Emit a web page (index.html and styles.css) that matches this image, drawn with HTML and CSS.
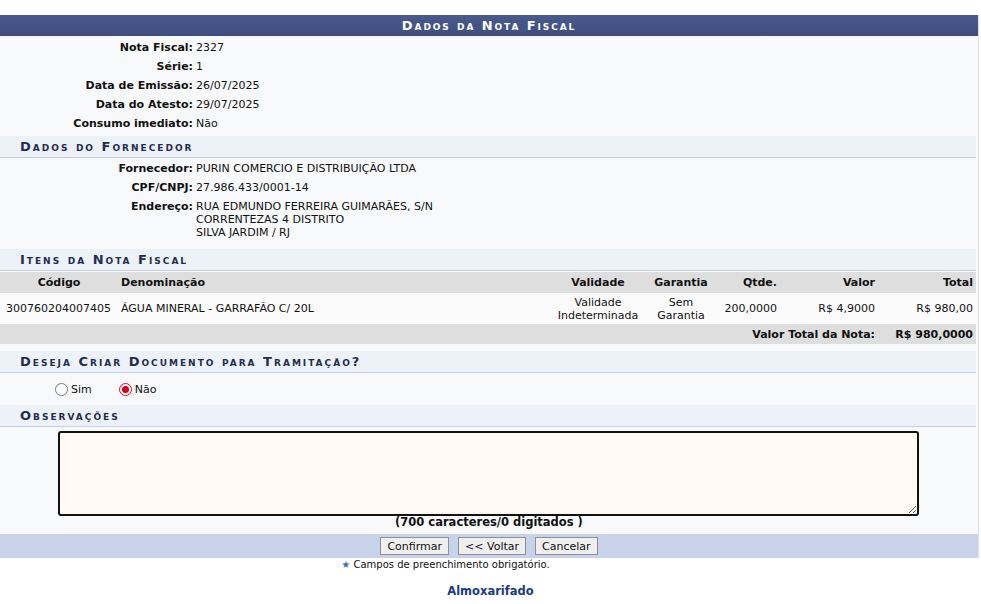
FILE: index.html
```html
<!DOCTYPE html>
<html lang="pt-BR">
<head>
<meta charset="utf-8">
<title>Dados da Nota Fiscal</title>
<link rel="stylesheet" href="styles.css">
</head>
<body>
<div class="page">
  <div class="form">
    <div class="caption">Dados da Nota Fiscal</div>

    <div class="info info-first">
      <div class="row"><span class="lbl">Nota Fiscal:</span><span class="val">2327</span></div>
      <div class="row"><span class="lbl">Série:</span><span class="val">1</span></div>
      <div class="row"><span class="lbl">Data de Emissão:</span><span class="val">26/07/2025</span></div>
      <div class="row"><span class="lbl">Data do Atesto:</span><span class="val">29/07/2025</span></div>
      <div class="row"><span class="lbl">Consumo imediato:</span><span class="val">Não</span></div>
    </div>

    <div class="subcaption">Dados do Fornecedor</div>
    <div class="info info-forn">
      <div class="row"><span class="lbl">Fornecedor:</span><span class="val">PURIN COMERCIO E DISTRIBUIÇÃO LTDA</span></div>
      <div class="row"><span class="lbl">CPF/CNPJ:</span><span class="val">27.986.433/0001-14</span></div>
      <div class="row"><span class="lbl">Endereço:</span><span class="val">RUA EDMUNDO FERREIRA GUIMARÃES, S/N<br>CORRENTEZAS 4 DISTRITO<br>SILVA JARDIM / RJ</span></div>
    </div>

    <div class="subcaption">Itens da Nota Fiscal</div>
    <table class="itens">
      <colgroup>
        <col class="c-cod"><col class="c-den"><col class="c-val"><col class="c-gar"><col class="c-qt"><col class="c-vl"><col class="c-tot">
      </colgroup>
      <thead>
        <tr>
          <th class="center">Código</th>
          <th class="left">Denominação</th>
          <th class="center">Validade</th>
          <th class="center">Garantia</th>
          <th class="right">Qtde.</th>
          <th class="right">Valor</th>
          <th class="right">Total</th>
        </tr>
      </thead>
      <tbody>
        <tr class="item">
          <td class="left">300760204007405</td>
          <td class="left">ÁGUA MINERAL - GARRAFÃO C/ 20L</td>
          <td class="center">Validade<br>Indeterminada</td>
          <td class="center">Sem<br>Garantia</td>
          <td class="right">200,0000</td>
          <td class="right">R$ 4,9000</td>
          <td class="right">R$ 980,00</td>
        </tr>
      </tbody>
      <tfoot>
        <tr>
          <td colspan="6" class="right">Valor Total da Nota:</td>
          <td class="right">R$ 980,0000</td>
        </tr>
      </tfoot>
    </table>

    <div class="subcaption">Deseja Criar Documento para Tramitação?</div>
    <div class="radios">
      <label class="radio"><span class="rb"></span>Sim</label>
      <label class="radio"><span class="rb rb-on"></span>Não</label>
    </div>

    <div class="subcaption">Observações</div>
    <div class="obs">
      <textarea class="obs-text"></textarea>
      <div class="counter">(700 caracteres/0 digitados )</div>
    </div>

    <div class="buttons">
      <button class="btn" type="button">Confirmar</button>
      <button class="btn" type="button">&lt;&lt; Voltar</button>
      <button class="btn" type="button">Cancelar</button>
    </div>
  </div>

  <div class="required"><span class="star">★</span> Campos de preenchimento obrigatório.</div>
  <div class="module">Almoxarifado</div>
</div>
</body>
</html>
```

FILE: styles.css
```css
html, body {
  margin: 0;
  padding: 0;
  background: #ffffff;
}

body {
  font-family: "DejaVu Sans", Verdana, sans-serif;
  font-size: 11px;
  color: #111;
}

.page {
  padding-top: 15px;
}

.form {
  width: 978px;
  background: #f8f9fb;
  border-right: 1px solid #dde1e8;
}

.caption {
  height: 21px;
  line-height: 22px;
  background: linear-gradient(#4b5a8c, #3f4e7f);
  color: #ffffff;
  font-weight: bold;
  font-variant: small-caps;
  font-size: 13px;
  letter-spacing: 1.9px;
  text-align: center;
}

.info-first {
  padding: 2px 0 3px;
}

.info-forn {
  padding: 1px 0 7px;
}

.row {
  display: flex;
  padding: 3px 0;
  line-height: 13px;
}

.lbl {
  width: 193px;
  text-align: right;
  font-weight: bold;
  flex: none;
}

.val {
  padding-left: 3px;
}

.subcaption {
  height: 21px;
  line-height: 22px;
  margin-right: 2px;
  background: #edf1f8;
  border-bottom: 1px solid #c4cee2;
  color: #1f2d52;
  font-weight: bold;
  font-variant: small-caps;
  font-size: 13px;
  letter-spacing: 2px;
  padding-left: 20px;
}

.itens {
  width: 976px;
  table-layout: fixed;
  border-collapse: collapse;
  margin-top: 1px;
  margin-bottom: 7px;
}

.c-cod { width: 118px; }
.c-den { width: 433px; }
.c-val { width: 94px; }
.c-gar { width: 72px; }
.c-qt { width: 63px; }
.c-vl { width: 98px; }
.c-tot { width: 98px; }

.itens th,
.itens td {
  padding: 0 3px;
  line-height: 13px;
  white-space: nowrap;
}

.itens thead tr {
  background: #dedede;
  height: 21px;
}

.itens th {
  font-weight: bold;
}

.itens .item {
  background: #fbfbfb;
  height: 31px;
}

.itens tfoot tr {
  background: #dedede;
  height: 20px;
}

.itens tfoot td {
  font-weight: bold;
}

.center { text-align: center; }
.left { text-align: left; }
.right { text-align: right; }

.itens tbody td.left:first-child {
  padding-left: 6px;
}

.radios {
  display: flex;
  align-items: center;
  gap: 27px;
  height: 32px;
  padding-left: 55px;
}

.radio {
  display: flex;
  align-items: center;
  gap: 3px;
  padding-top: 1px;
}

.rb {
  width: 11px;
  height: 11px;
  border: 1px solid #777;
  border-radius: 50%;
  background: #fff;
  position: relative;
}

.rb-on {
  border-color: #c8102e;
}

.rb-on::after {
  content: "";
  position: absolute;
  left: 2px;
  top: 2px;
  width: 7px;
  height: 7px;
  border-radius: 50%;
  background: #d8001a;
}

.obs {
  padding-top: 4px;
  text-align: center;
}

.obs-text {
  display: block;
  box-sizing: border-box;
  width: 861px;
  height: 85px;
  margin: 0 0 0 58px;
  border: 2px solid #111;
  border-radius: 3px;
  background: #fffbf4;
  resize: both;
}

.counter {
  font-weight: bold;
  font-size: 11.5px;
  line-height: 13px;
  padding-bottom: 5px;
}

.buttons {
  display: flex;
  justify-content: center;
  gap: 9px;
  height: 24px;
  align-items: center;
  background: #c8d3eb;
}

.btn {
  font-family: "DejaVu Sans", Verdana, sans-serif;
  font-size: 11px;
  height: 18px;
  padding: 0 6px;
  background: #efefef;
  border: 1px solid #8f8f8f;
  border-radius: 0;
  color: #111;
}

.required {
  text-align: center;
  font-size: 10px;
  line-height: 13px;
  margin-top: 0;
  padding-right: 90px;
}

.star {
  color: #3f6fc4;
  font-size: 10px;
}

.module {
  text-align: center;
  font-weight: bold;
  color: #1c3a84;
  font-size: 11.5px;
  margin-top: 13px;
}
```
